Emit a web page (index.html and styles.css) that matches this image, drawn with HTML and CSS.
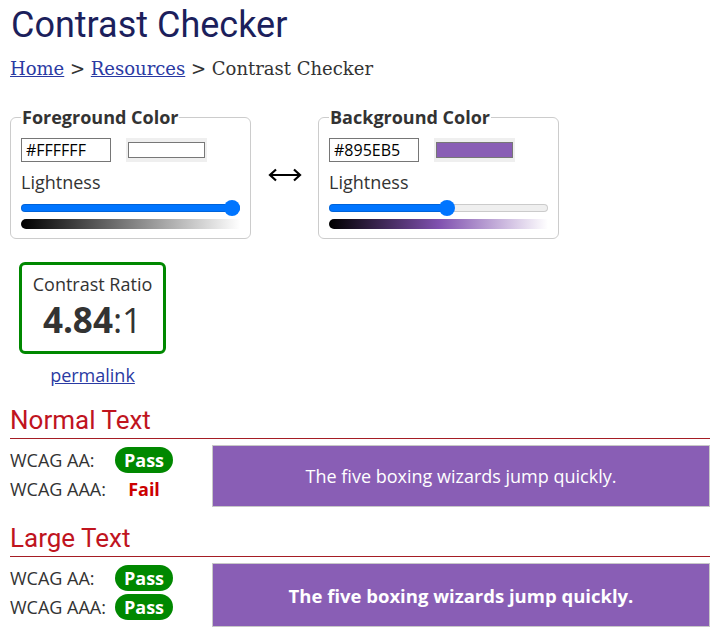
FILE: index.html
```html
<html>

<head>
    <link rel="stylesheet" href="styles.css">
</head>

<body>

    <h1 class="title">Contrast Checker</h1>
    <div class="crumbs">
        <a href="#">Home</a> &gt; <a href="#">Resources</a> &gt; Contrast Checker
    </div>

    <div class="pickers">
        <fieldset class="picker">
            <legend>Foreground Color</legend>
            <div class="hex-row">
                <input class="hex" type="text" value="#FFFFFF">
                <span class="swatch"><span class="swatch-fill" style="background:#ffffff"></span></span>
            </div>
            <div class="label">Lightness</div>
            <input class="lightness" type="range" min="0" max="100" value="100" style="--pos:100%">
            <div class="lbar" style="background:linear-gradient(to right,#000,#fff)"></div>
        </fieldset>

        <div class="swap">
            <svg width="34" height="14" viewBox="0 0 34 14">
                <path d="M2 7H32M8 1.5L2 7L8 12.5M26 1.5L32 7L26 12.5" fill="none" stroke="#000" stroke-width="2.2" />
            </svg>
        </div>

        <fieldset class="picker">
            <legend>Background Color</legend>
            <div class="hex-row">
                <input class="hex" type="text" value="#895EB5">
                <span class="swatch"><span class="swatch-fill" style="background:#895eb5"></span></span>
            </div>
            <div class="label">Lightness</div>
            <input class="lightness" type="range" min="0" max="100" value="54" style="--pos:54%">
            <div class="lbar" style="background:linear-gradient(to right,#000,hsl(270,37%,50%),#fff)"></div>
        </fieldset>
    </div>

    <div class="ratio-wrap">
        <div class="ratio">
            <div class="ratio-title">Contrast Ratio</div>
            <div class="ratio-value"><b>4.84</b>:1</div>
        </div>
        <a class="permalink" href="#">permalink</a>
    </div>

    <div class="result">
        <h2>Normal Text</h2>
        <div class="result-body">
            <div class="checks">
                <div class="check"><span class="check-name">WCAG AA:</span><span class="verdict pass">Pass</span></div>
                <div class="check"><span class="check-name">WCAG AAA:</span><span class="verdict fail">Fail</span></div>
            </div>
            <div class="sample">The five boxing wizards jump quickly.</div>
        </div>
    </div>

    <div class="result large">
        <h2>Large Text</h2>
        <div class="result-body">
            <div class="checks">
                <div class="check"><span class="check-name">WCAG AA:</span><span class="verdict pass">Pass</span></div>
                <div class="check"><span class="check-name">WCAG AAA:</span><span class="verdict pass">Pass</span></div>
            </div>
            <div class="sample">The five boxing wizards jump quickly.</div>
        </div>
    </div>

</body>

</html>
```

FILE: styles.css
```css
body {
    margin: 0;
    padding: 0 16px 0 10px;
    font-family: "Open Sans", sans-serif;
    font-size: 18px;
    color: #333;
}

a {
    color: #2a3aa3;
}

.title {
    font: 400 36px/42px Roboto, sans-serif;
    color: #1c1f5c;
    margin: 4px 0 0 1px;
}

.crumbs {
    font: 18px/22px "DejaVu Serif", serif;
    margin-top: 12px;
    color: #333;
}

/* colour pickers */
.pickers {
    display: flex;
    align-items: center;
    margin-top: 26px;
}

.picker {
    box-sizing: border-box;
    width: 241px;
    margin: 0;
    padding: 10px 10px 9px 10px;
    border: 1px solid #ccc;
    border-radius: 6px;
}

.picker legend {
    font-weight: bold;
    line-height: 22px;
    padding: 0 1px;
}

.hex-row {
    display: flex;
    gap: 15px;
}

.hex {
    box-sizing: border-box;
    width: 90px;
    height: 24px;
    margin: 0;
    padding: 0 4px;
    border: 1px solid #767676;
    font: 16px "Open Sans", sans-serif;
    color: #000;
}

.swatch {
    box-sizing: border-box;
    width: 81px;
    height: 24px;
    padding: 4px 2px;
    background: #efefef;
}

.swatch-fill {
    display: block;
    box-sizing: border-box;
    height: 16px;
    border: 1px solid #777;
}

.label {
    line-height: 24px;
    margin-top: 8px;
}

.lightness {
    -webkit-appearance: none;
    display: block;
    width: 219px;
    height: 16px;
    margin: 6px 0 0 0;
    background: transparent;
}

.lightness::-webkit-slider-runnable-track {
    height: 8px;
    border-radius: 4px;
    background: linear-gradient(to right, #0075ff var(--pos), #efefef var(--pos));
    box-shadow: inset 0 0 0 1px rgba(0, 0, 0, 0.15);
}

.lightness::-webkit-slider-thumb {
    -webkit-appearance: none;
    width: 16px;
    height: 16px;
    margin-top: -4px;
    border-radius: 50%;
    background: #0075ff;
}

.lbar {
    height: 10px;
    margin-top: 3px;
    border-radius: 5px 0 0 5px;
}

.swap {
    width: 67px;
    display: flex;
    justify-content: center;
    margin-top: 5px;
}

/* ratio */
.ratio-wrap {
    width: 147px;
    margin: 23px 0 0 9px;
    text-align: center;
}

.ratio {
    box-sizing: border-box;
    height: 92px;
    padding-top: 7px;
    border: 3px solid #008800;
    border-radius: 6px;
}

.ratio-title {
    line-height: 24px;
}

.ratio-value {
    font-size: 35px;
    line-height: 40px;
    margin-top: 4px;
}

.permalink {
    display: block;
    margin-top: 9px;
    line-height: 24px;
}

/* results */
.result {
    margin-top: 18px;
}

.result.large {
    margin-top: 16px;
}

.result h2 {
    font: 400 26px/30px Roboto, sans-serif;
    color: #c0141e;
    margin: 0;
    padding-bottom: 3px;
    border-bottom: 1px solid #a51d24;
}

.result-body {
    display: flex;
    margin-top: 6px;
}

.checks {
    width: 202px;
    flex: none;
}

.check {
    display: flex;
    align-items: center;
    height: 29px;
}

.check-name {
    width: 105px;
}

.verdict {
    width: 58px;
    text-align: center;
    font-weight: bold;
    line-height: 26px;
}

.pass {
    background: #008800;
    color: #fff;
    border-radius: 13px;
}

.fail {
    color: #cc0000;
}

.sample {
    flex: 1;
    height: 62px;
    box-sizing: border-box;
    display: flex;
    align-items: center;
    justify-content: center;
    border: 1px solid #c8c8c8;
    background: #895eb5;
    color: #fff;
}

.large .sample {
    height: 64px;
    font-weight: bold;
    font-size: 18.5px;
}
```
